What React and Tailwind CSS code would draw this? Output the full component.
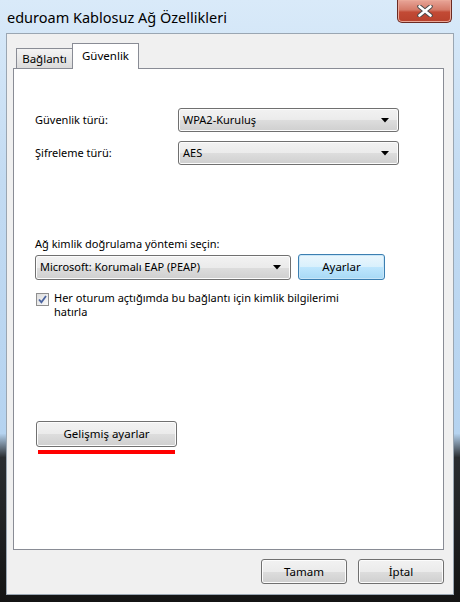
import { useState } from "react";

function Button({ children, className = "", focused = false }) {
  return (
    <button
      className={`flex items-center justify-center rounded-[3px] border text-[11.5px] text-black ${
        focused
          ? "border-[#3c7fb1] bg-[linear-gradient(to_bottom,#eaf6fd_0%,#d9f0fc_50%,#bee6fd_51%,#a7d9f5_100%)] shadow-[inset_0_0_0_1px_#c8e6f8]"
          : "border-[#707070] bg-[linear-gradient(to_bottom,#f2f2f2_0%,#ebebeb_50%,#dddddd_51%,#cfcfcf_100%)] shadow-[inset_0_0_0_1px_#fcfcfc]"
      } ${className}`}
    >
      {children}
    </button>
  );
}

function Combo({ value, className = "" }) {
  return (
    <div
      className={`flex items-center justify-between rounded-[3px] border border-[#707070] bg-[linear-gradient(to_bottom,#f2f2f2_0%,#ebebeb_50%,#dddddd_51%,#cfcfcf_100%)] pl-[4px] pr-[9px] text-black shadow-[inset_0_0_0_1px_#fcfcfc] ${className}`}
    >
      <span>{value}</span>
      <svg width="8" height="5" viewBox="0 0 8 5">
        <path d="M0 0 H8 L4 4.5 Z" fill="#000" />
      </svg>
    </div>
  );
}

export default function App() {
  const [remember, setRemember] = useState(true);

  return (
    <div className="flex h-[602px] w-[460px] flex-col overflow-hidden bg-[linear-gradient(to_bottom,#d9eaf9_0%,#c3dbf2_30%,#b5d3f0_72%,#2a2d30_76%,#141414_100%)] font-['Noto_Sans',sans-serif]">
      {/* Title bar */}
      <div className="flex h-[33px] shrink-0 items-start justify-between">
        <div className="pl-[7px] pt-[7px] text-[14.5px] leading-[20px] text-black">eduroam Kablosuz Ağ Özellikleri</div>
        <div className="mr-[8px] flex h-[23px] w-[55px] items-center justify-center rounded-b-[5px] border border-t-0 border-[#6b2a22] bg-[linear-gradient(to_bottom,#e8a598_0%,#d47a68_45%,#c24a35_55%,#b8412c_100%)] shadow-[inset_0_0_0_1px_#eaa898]">
          <svg width="16" height="12" viewBox="0 0 16 12">
            <path d="M2.5 1.5 L13.5 10.5 M13.5 1.5 L2.5 10.5" stroke="#4a4a4a" strokeWidth="4.5" strokeLinecap="round" />
            <path d="M2.5 1.5 L13.5 10.5 M13.5 1.5 L2.5 10.5" stroke="#ffffff" strokeWidth="2.6" strokeLinecap="round" />
          </svg>
        </div>
      </div>

      {/* Client area */}
      <div className="mx-[6px] mb-[7px] flex flex-1 flex-col border border-[#9aa6b2] bg-[#f0f0f0] pl-[6px] pr-[9px] pt-[9px]">
        {/* Tabs */}
        <div className="flex items-end pl-[3px] text-[11.5px]">
          <div className="flex h-[20px] w-[57px] items-center justify-center border border-b-0 border-[#898c95] bg-[linear-gradient(to_bottom,#f3f3f3_0%,#e8e8e8_50%,#dbdbdb_100%)] text-black">
            Bağlantı
          </div>
          <div className="relative z-10 -mb-px -ml-px flex h-[26px] w-[67px] items-start justify-center border border-b-0 border-[#898c95] bg-white pt-[3px] text-black">
            Güvenlik
          </div>
        </div>

        {/* Panel */}
        <div className="flex h-[482px] flex-col border border-[#898c95] bg-white pl-[21px] text-[11px] text-black">
          <div className="mt-[39px] flex items-center">
            <span className="w-[143px]">Güvenlik türü:</span>
            <Combo value="WPA2-Kuruluş" className="h-[24px] w-[221px]" />
          </div>
          <div className="mt-[9px] flex items-center">
            <span className="w-[143px]">Şifreleme türü:</span>
            <Combo value="AES" className="h-[24px] w-[221px]" />
          </div>

          <div className="mt-[71px] leading-[16px]">Ağ kimlik doğrulama yöntemi seçin:</div>
          <div className="mt-[2px] flex items-center">
            <Combo value="Microsoft: Korumalı EAP (PEAP)" className="h-[25px] w-[256px]" />
            <Button focused className="ml-[7px] h-[26px] w-[87px]">Ayarlar</Button>
          </div>

          <label className="mt-[13px] flex items-start pl-[1px]" onClick={() => setRemember(!remember)}>
            <span className="flex h-[13px] w-[13px] shrink-0 items-center justify-center border border-[#8f8f8f] bg-[linear-gradient(135deg,#dcdcdc_0%,#fbfbfb_100%)]">
              {remember && (
                <svg width="9" height="9" viewBox="0 0 9 9">
                  <path d="M1 4.5 L3.4 7.2 L8 1" fill="none" stroke="#4b64a0" strokeWidth="1.8" />
                </svg>
              )}
            </span>
            <span className="ml-[5px] -mt-[2px] whitespace-nowrap leading-[14px]">
              Her oturum açtığımda bu bağlantı için kimlik bilgilerimi
              <br />
              hatırla
            </span>
          </label>

          <Button className="ml-[1px] mt-[102px] h-[26px] w-[141px]">Gelişmiş ayarlar</Button>
          <div className="ml-[3px] mt-[3px] h-[4px] w-[137px] bg-[#ff0000]" />
        </div>

        {/* Bottom buttons */}
        <div className="mt-[9px] flex justify-end gap-[11px]">
          <Button className="h-[25px] w-[86px]">Tamam</Button>
          <Button className="h-[25px] w-[86px]">İptal</Button>
        </div>
      </div>
    </div>
  );
}
